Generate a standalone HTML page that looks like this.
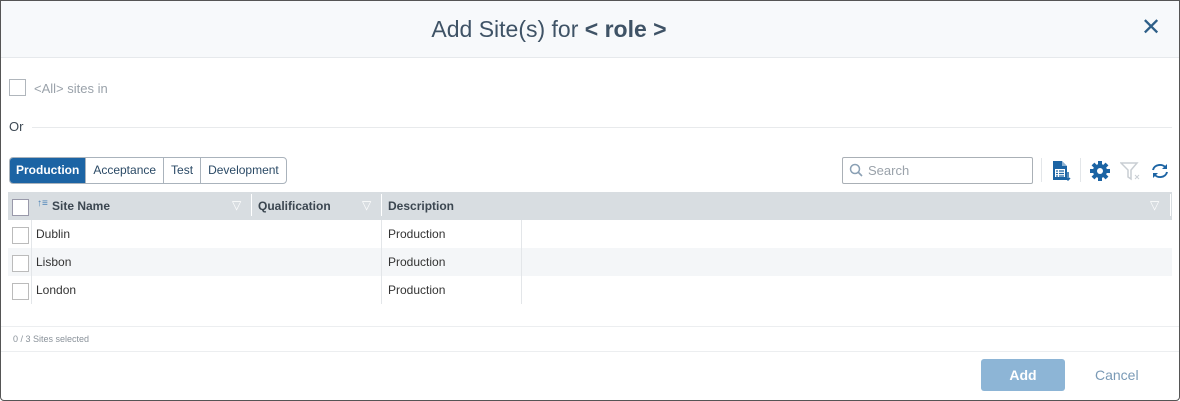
<!DOCTYPE html><html><head><style>
body{margin:0;width:1180px;height:401px;overflow:hidden;font-family:"Liberation Sans",sans-serif;background:#fff}
.win{position:absolute;left:0;top:0;width:1180px;height:401px;overflow:hidden}
.bd{position:absolute;left:0;top:0;width:1178px;height:399px;border:1px solid #555;border-radius:0 0 4px 4px;z-index:5}
.hd{position:absolute;left:0;top:0;width:1180px;height:57px;background:#f7f9fb;border-bottom:1px solid #e6e9ec}
.title{position:absolute;left:0;width:1098px;top:16px;text-align:center;font-size:23px;color:#3f5366}
.x{position:absolute;left:1141px;top:13px;font-size:24px;color:#2e5f88}
.cb{position:absolute;width:15px;height:15px;border:1px solid #aab;background:#fff}
.t{position:absolute;font-size:12px;color:#333;white-space:nowrap}
.tabs{position:absolute;left:9px;top:157px;height:25px;border:1px solid #aab3bc;border-radius:4px;display:flex;overflow:hidden;font-size:12px}
.tabs div{padding:0 7px;line-height:25px;color:#2b4a66;border-left:1px solid #aab3bc}
.tabs div:first-child{border:none;background:#1c64a4;color:#fff;font-weight:bold;padding:0 6px}
.row{position:absolute;left:8px;width:1164px;height:28px}
.vl{position:absolute;width:1px;background:#e3e6e9}
</style></head><body><div class="win">
<div class="bd"></div>
<div class="hd"><div class="title">Add Site(s) for <b>&lt; role &gt;</b></div><div class="x">✕</div></div>
<div class="cb" style="left:9px;top:79px;border-color:#b0b6bc"></div>
<div class="t" style="left:34px;top:81px;color:#9aa2aa;font-size:13px">&lt;All&gt; sites in</div>
<div class="t" style="left:9px;top:119px;font-size:13px;color:#3f4a55">Or</div>
<div style="position:absolute;left:32px;top:127px;width:1140px;height:1px;background:#e8eaec"></div>
<div class="tabs"><div>Production</div><div>Acceptance</div><div>Test</div><div>Development</div></div>
<div style="position:absolute;left:842px;top:157px;width:189px;height:25px;border:1px solid #aab0b6;border-radius:2px"></div>
<svg style="position:absolute;left:849px;top:163px" width="14" height="14"><circle cx="6" cy="6" r="4.5" fill="none" stroke="#8aa0b4" stroke-width="1.5"/><path d="M9 9l4 4" stroke="#8aa0b4" stroke-width="1.6"/></svg>
<div class="t" style="left:868px;top:163px;color:#9aa2aa;font-size:13px">Search</div>
<div class="vl" style="left:1041px;top:158px;height:24px"></div>
<div class="vl" style="left:1080px;top:158px;height:24px"></div>
<svg style="position:absolute;left:1050px;top:160px" width="22" height="22"><path d="M3 1h9l5 5v14H3z" fill="#1c64a4"/><path d="M12 1v5h5" fill="#fff" opacity=".5"/><rect x="5" y="9" width="10" height="8" fill="#fff"/><path d="M6 11h2M9 11h5M6 13.5h2M9 13.5h5M6 16h2M9 16h5" stroke="#1c64a4" stroke-width="1.2"/><path d="M18 12v8M16 18l2 2 2-2" stroke="#1c64a4" stroke-width="1.5" fill="none"/></svg>
<svg style="position:absolute;left:1089px;top:160px" width="22" height="22" viewBox="0 0 22 22"><g fill="#1c64a4"><circle cx="11" cy="11" r="7"/><g stroke="#1c64a4" stroke-width="4"><path d="M11 1v20M1 11h20M4 4l14 14M18 4L4 18"/></g></g><circle cx="11" cy="11" r="3" fill="#fff"/></svg>
<svg style="position:absolute;left:1120px;top:161px" width="22" height="20"><path d="M1 2h16l-6 7v9l-3-2V9z" fill="none" stroke="#c9ced3" stroke-width="1.5"/><path d="M15 14l4 4M19 14l-4 4" stroke="#c9ced3"/></svg>
<svg style="position:absolute;left:1150px;top:162px" width="20" height="18" viewBox="0 0 20 18"><path d="M3 8a7 6 0 0 1 13-2M17 10a7 6 0 0 1-13 2" fill="none" stroke="#1c64a4" stroke-width="2"/><path d="M17 2v5h-5zM3 16v-5h5z" fill="#1c64a4"/></svg>
<div class="row" style="top:192px;background:#d8dde1"></div>
<div class="cb" style="left:12px;top:199px;border-color:#99a"></div>
<div class="t" style="left:37px;top:198px;color:#4d84b8;font-size:10px">↑≡</div>
<div class="t" style="left:52px;top:199px;font-weight:bold;color:#3b4650">Site Name</div>
<div class="t" style="left:258px;top:199px;font-weight:bold;color:#3b4650">Qualification</div>
<div class="t" style="left:388px;top:199px;font-weight:bold;color:#3b4650">Description</div>
<div class="t" style="left:232px;top:198px;color:#fff">▽</div><div class="t" style="left:362px;top:198px;color:#fff">▽</div><div class="t" style="left:1150px;top:198px;color:#fff">▽</div>
<div style="position:absolute;left:251px;top:194px;width:1px;height:22px;background:#fff"></div>
<div style="position:absolute;left:381px;top:194px;width:1px;height:22px;background:#fff"></div>
<div style="position:absolute;left:1170px;top:194px;width:1px;height:22px;background:#fff"></div>
<div class="row" style="top:220px"></div><div class="row" style="top:248px;background:#f4f6f8"></div><div class="row" style="top:276px"></div>
<div class="vl" style="left:31px;top:220px;height:84px"></div>
<div class="vl" style="left:381px;top:220px;height:84px"></div>
<div class="vl" style="left:521px;top:220px;height:84px"></div>
<div class="cb" style="left:12px;top:227px;border-color:#bbb"></div><div class="cb" style="left:12px;top:255px;border-color:#bbb"></div><div class="cb" style="left:12px;top:283px;border-color:#bbb"></div>
<div class="t" style="left:36px;top:227px">Dublin</div><div class="t" style="left:388px;top:227px">Production</div>
<div class="t" style="left:36px;top:255px">Lisbon</div><div class="t" style="left:388px;top:255px">Production</div>
<div class="t" style="left:36px;top:283px">London</div><div class="t" style="left:388px;top:283px">Production</div>
<div style="position:absolute;left:0;top:326px;width:1180px;height:1px;background:#eceef0"></div>
<div class="t" style="left:13px;top:334px;font-size:9px;color:#8a929a">0 / 3 Sites selected</div>
<div style="position:absolute;left:0;top:351px;width:1180px;height:1px;background:#eceef0"></div>
<div style="position:absolute;left:981px;top:359px;width:84px;height:32px;background:#8db5d6;border-radius:3px;color:#fff;font-weight:bold;font-size:14px;text-align:center;line-height:32px">Add</div>
<div class="t" style="left:1095px;top:367px;font-size:14px;color:#7a9ab6">Cancel</div>
</div></body></html>
